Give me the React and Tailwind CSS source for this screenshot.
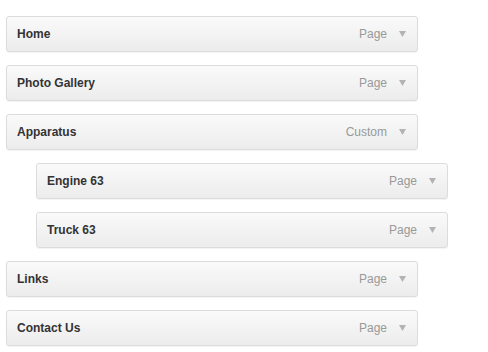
const items = [
  { label: 'Home', type: 'Page', depth: 0 },
  { label: 'Photo Gallery', type: 'Page', depth: 0 },
  { label: 'Apparatus', type: 'Custom', depth: 0 },
  { label: 'Engine 63', type: 'Page', depth: 1 },
  { label: 'Truck 63', type: 'Page', depth: 1 },
  { label: 'Links', type: 'Page', depth: 0 },
  { label: 'Contact Us', type: 'Page', depth: 0 },
]

function MenuItem({ label, type, depth }) {
  return (
    <div className={depth ? 'pl-[30px]' : ''}>
      <div className="flex items-center h-[36px] w-[412px] rounded-[3px] border border-[#dcdcdc] bg-gradient-to-b from-[#fafafa] to-[#ececec] shadow-[0_1px_1px_rgba(0,0,0,0.05)] pl-[10px] pr-[11px]">
        <span className="flex-1 text-[12px] font-bold text-[#333]">{label}</span>
        <span className="text-[12px] text-[#999]">{type}</span>
        <svg width="7" height="6" viewBox="0 0 7 6" className="ml-[12px]">
          <path d="M0 0 H7 L3.5 6 Z" fill="#b3b3b3" />
        </svg>
      </div>
    </div>
  )
}

export default function App() {
  return (
    <div className="w-[488px] h-[352px] bg-white pt-[16px] pl-[6px] flex flex-col gap-[13px]"
      style={{ fontFamily: '"Liberation Sans", Arial, sans-serif' }}>
      {items.map(it => <MenuItem key={it.label} {...it} />)}
    </div>
  )
}
